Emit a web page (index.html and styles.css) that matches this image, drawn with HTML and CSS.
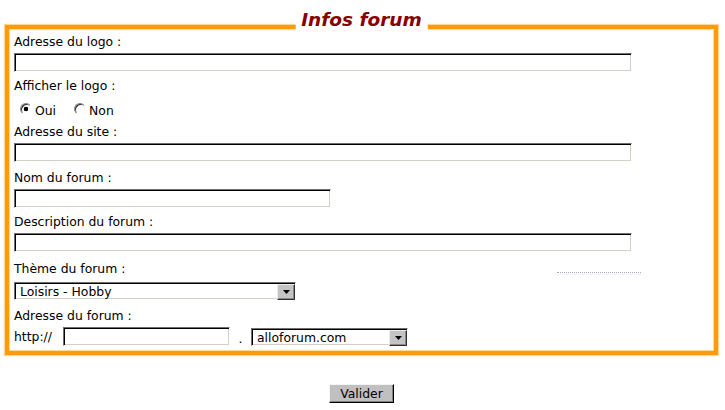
FILE: index.html
```html
<!DOCTYPE html>
<html lang="fr">
<head>
<meta charset="utf-8">
<title>Infos forum</title>
<link rel="stylesheet" href="styles.css">
</head>
<body>
<form class="page">
  <div class="frame">
    <div class="frame-title">Infos forum</div>

    <div class="label">Adresse du logo :</div>
    <input class="field field-wide" type="text">

    <div class="label label-gap6">Afficher le logo :</div>
    <div class="radios">
      <label class="choice"><input class="radio" type="radio" name="logo" checked><span>Oui</span></label>
      <label class="choice"><input class="radio" type="radio" name="logo"><span>Non</span></label>
    </div>

    <div class="label label-gap6">Adresse du site :</div>
    <input class="field field-wide" type="text">

    <div class="label label-gap8">Nom du forum :</div>
    <input class="field field-mid" type="text">

    <div class="label label-gap6">Description du forum :</div>
    <input class="field field-wide" type="text">

    <div class="label-row label-gap9">
      <div class="label label-theme">Thème du forum :</div>
      <span class="dots"></span>
    </div>
    <div class="select select-theme">
      <span class="select-value">Loisirs - Hobby</span>
      <span class="select-btn"><svg width="7" height="4" viewBox="0 0 7 4"><path d="M0 0H7L3.5 4Z" fill="#000"/></svg></span>
    </div>

    <div class="label label-gap8">Adresse du forum :</div>
    <div class="url-row">
      <span class="prefix">http://</span>
      <input class="field field-sub" type="text">
      <span class="sep">.</span>
      <div class="select select-domain">
        <span class="select-value">alloforum.com</span>
        <span class="select-btn"><svg width="7" height="4" viewBox="0 0 7 4"><path d="M0 0H7L3.5 4Z" fill="#000"/></svg></span>
      </div>
    </div>
  </div>

  <div class="actions">
    <button class="btn" type="button">Valider</button>
  </div>
</form>
</body>
</html>
```

FILE: styles.css
```css
* { box-sizing: border-box; }

html, body {
  margin: 0;
  padding: 0;
  background: #fff;
}

body {
  font-family: "DejaVu Sans", Verdana, sans-serif;
  font-size: 12.4px;
  color: #000;
}

.page {
  width: 713px;
  margin: 25px 0 0 5px;
}

.frame {
  position: relative;
  border: 4px solid #ff9a0a;
  padding: 5px 0 5px 5px;
  box-shadow: 0 0 1px 1px #ffd890, inset 0 0 1px 1px #ffd890;
}

.frame-title {
  position: absolute;
  top: -19px;
  left: 50%;
  transform: translateX(-50%);
  padding: 0 6px;
  background: #fff;
  color: #880000;
  font-size: 18.5px;
  font-weight: bold;
  font-style: italic;
  line-height: 20px;
  white-space: nowrap;
}

.label {
  line-height: 15px;
  margin-bottom: 4px;
}

.label-gap6 { margin-top: 6px; }
.label-gap8 { margin-top: 8px; }
.label-gap9 { margin-top: 9px; }

.label-row {
  display: flex;
}

.label-theme {
  margin-bottom: 6px;
}

.dots {
  margin: 11px 73px 0 auto;
  width: 84px;
  height: 3px;
  border-top: 1px dotted #a8a8bc;
  border-bottom: 1px dotted #f8e6f6;
}

.field {
  display: block;
  height: 19px;
  margin: 0;
  padding: 0 3px;
  font: inherit;
  background: #fff;
  border: 1px solid;
  border-color: #6e6e6e #fff #fff #6e6e6e;
  box-shadow: inset 1px 1px 0 #000, inset -1px -1px 0 #d4d0c8;
  outline: none;
}

.field-wide { width: 618px; }
.field-mid { width: 317px; }
.field-sub { width: 167px; }

.radios {
  display: flex;
  height: 15px;
  margin-top: 10px;
  padding-left: 6px;
}

.choice {
  display: flex;
  line-height: 15px;
}

.choice + .choice {
  margin-left: 18px;
}

.radio {
  appearance: none;
  -webkit-appearance: none;
  width: 12px;
  height: 12px;
  margin: 0 3px 0 0;
  border-radius: 50%;
  border: 1px solid;
  border-color: #808080 #fff #fff #808080;
  box-shadow: inset 1px 1px 0 #303030;
  background: #fff;
}

.radio:checked {
  background: radial-gradient(circle at center, #000 0 2px, #fff 2.6px);
}

.select {
  display: flex;
  height: 18px;
  background: #fff;
  border: 1px solid;
  border-color: #6e6e6e #fff #fff #6e6e6e;
  box-shadow: inset 1px 1px 0 #000, inset -1px -1px 0 #d4d0c8;
  padding: 1px 0 0 1px;
}

.select-theme { width: 282px; }
.select-domain { width: 157px; }

.select-value {
  flex: 1;
  padding-left: 4px;
  line-height: 15px;
  white-space: nowrap;
}

.select-btn {
  width: 18px;
  height: 16px;
  display: flex;
  align-items: center;
  justify-content: center;
  background: #c4c4c4;
  border: 1px solid;
  border-color: #ececec #303030 #303030 #ececec;
  box-shadow: inset -1px -1px 0 #888;
}

.url-row {
  display: flex;
  align-items: center;
  margin-top: 4px;
  height: 19px;
}

.prefix {
  width: 49px;
  line-height: 15px;
}

.sep {
  width: 21px;
  text-align: center;
  line-height: 15px;
  padding-top: 4px;
}

.actions {
  display: flex;
  justify-content: center;
  margin-top: 29px;
}

.btn {
  width: 65px;
  height: 19px;
  margin: 0;
  padding: 0;
  font: inherit;
  line-height: 15px;
  color: #000;
  background: #c0c0c0;
  border: 1px solid;
  border-color: #f4f4f4 #000 #000 #f4f4f4;
  box-shadow: inset -1px -1px 0 #808080;
}
```
